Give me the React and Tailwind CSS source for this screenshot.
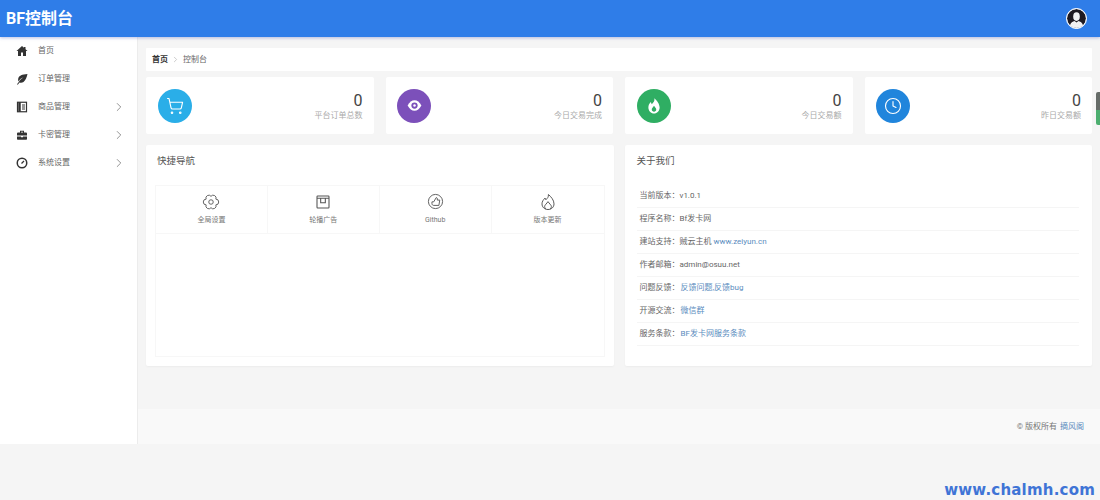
import React from 'react';
import { ChevronRight, ShoppingCart, Clock } from 'lucide-react';

const font = "font-['Roboto','Noto_Sans_CJK_SC',sans-serif]";

const HomeIcon = () => (
  <svg viewBox="0 0 24 24" className="w-[12px] h-[12px]" fill="#333">
    <path d="M12 2 1 12h3v10h6v-7h4v7h6V12h3l-4-3.6V4h-3v1.7z" />
  </svg>
);
const LeafIcon = () => (
  <svg viewBox="0 0 24 24" className="w-[12px] h-[12px]" fill="#333">
    <path d="M23 2C12 3 6 5 4.5 11c-.6 2.500-.1 4.500.6 5.800C7.500 12.500 11 10 15 8.500c-3.500 2.500-7 5.500-9.500 9.500L2 22.500l1.500 1L7 19c2.500 1 5.500.8 8-1 4-3 6.500-9 8-16z" />
  </svg>
);
const BookIcon = () => (
  <svg viewBox="0 0 24 24" className="w-[12px] h-[12px]" fill="none" stroke="#333" strokeWidth="2.4">
    <rect x="3" y="2.500" width="18" height="19" />
    <path d="M7 2.500v19" strokeWidth="5" />
    <path d="M12 8h6M12 12h6M12 16h6" strokeWidth="2" />
  </svg>
);
const BriefcaseIcon = () => (
  <svg viewBox="0 0 24 24" className="w-[12px] h-[12px]" fill="#333">
    <path d="M8 3.500h8V7h4a2 2 0 0 1 2 2v4H2V9a2 2 0 0 1 2-2h4zM10 5.500V7h4V5.500z" fillRule="evenodd" />
    <path d="M2 15h8v1.500h4V15h8v5a1.500 1.500 0 0 1-1.500 1.500h-17A1.500 1.500 0 0 1 2 20z" />
  </svg>
);
const GaugeIcon = () => (
  <svg viewBox="0 0 24 24" className="w-[12px] h-[12px]" fill="none" stroke="#333" strokeWidth="3">
    <circle cx="12" cy="12" r="9.500" />
    <path d="M11 13 16 8" strokeWidth="2.4" />
  </svg>
);
const EyeIcon = () => (
  <svg viewBox="0 0 24 24" className="w-[15px] h-[15px]">
    <path d="M1 12c3-5.500 6.800-8.500 11-8.500S20 6.500 23 12c-3 5.500-6.800 8.500-11 8.500S4 17.500 1 12z" fill="#fff" />
    <circle cx="12" cy="12" r="5" fill="#7c50ba" />
    <circle cx="12" cy="12" r="2" fill="#fff" />
  </svg>
);
const FlameIcon = () => (
  <svg viewBox="0 0 24 24" className="w-[18px] h-[18px]" fill="#fff">
    <path d="M12.500 1.500c.8 4-1.500 5.800-3.500 8-.6-.8-1-1.700-1.100-2.700C5.500 9 4.500 11.500 4.500 14c0 4.500 3.400 8 7.500 8s7.500-3.500 7.500-8c0-5-3.500-9.500-7-12.500zM12 19.500c-1.700 0-3-1.300-3-3 0-1.800 1.800-3 3-5 1.200 2 3 3.200 3 5 0 1.700-1.300 3-3 3z" fillRule="evenodd" />
  </svg>
);
const GearOutline = () => (
  <svg viewBox="0 0 24 24" className="w-[18px] h-[18px]" fill="none" stroke="#555" strokeWidth="1.2">
    <path d="M18.500 8.200A3.800 3.800 0 0 1 18.500 15.800A3.800 3.800 0 0 1 12 19.600A3.800 3.800 0 0 1 5.500 15.800A3.800 3.800 0 0 1 5.500 8.200A3.800 3.800 0 0 1 12 4.400A3.800 3.800 0 0 1 18.500 8.200z" strokeLinejoin="round" />
    <circle cx="12" cy="12" r="3" />
  </svg>
);
const BoxOutline = () => (
  <svg viewBox="0 0 24 24" className="w-[16px] h-[16px]" fill="none" stroke="#555" strokeWidth="1.6">
    <rect x="3" y="3" width="18" height="18" rx="1" />
    <path d="M3 6.500h18M8.500 6.500V13h7V6.500" />
  </svg>
);
const ThumbOutline = () => (
  <svg viewBox="0 0 24 24" className="w-[17px] h-[17px]" fill="none" stroke="#555" strokeWidth="1.3">
    <circle cx="12" cy="12" r="10" />
    <path d="M7 12.500h2.500L13 6.500c1.300 0 2 1.200 1.500 3.500H18l-1.200 7.500H9.500C8 17.500 7 16.500 7 15z" strokeLinejoin="round" />
  </svg>
);
const FlameOutline = () => (
  <svg viewBox="0 0 24 24" className="w-[18px] h-[18px]" fill="none" stroke="#555" strokeWidth="1.3">
    <path d="M12.500 2c.6 3.500-1.500 5-3.300 7-.6-.7-.9-1.500-1-2.300C5.700 9 4 11.500 4 14.500 4 19 7.500 22 12 22s8-3 8-7.500c0-5-3.800-9.500-7.500-12.500z" strokeLinejoin="round" />
    <path d="M9 21.500c-1-1-1.500-2.200-1.500-3.500 0-2 3-4 4.500-6.500 1.500 2.500 4.500 4.500 4.500 6.500 0 1.300-.5 2.500-1.500 3.500" />
  </svg>
);
const Avatar = () => (
  <svg viewBox="0 0 24 24" className="w-[21px] h-[21px] rounded-full border border-white bg-white">
    <circle cx="12" cy="12" r="12" fill="#1e1a22" />
    <ellipse cx="12" cy="9.500" rx="4.200" ry="5.500" fill="#f1f1f3" />
    <path d="M3.500 21c1-4 4-5.500 6-6l2.500 2 2.500-2c2 .5 5 2 6 6-2.200 2-5.200 3-8.500 3s-6.300-1-8.500-3z" fill="#f1f1f3" />
  </svg>
);

const menus = [
  { name: '首页', icon: <HomeIcon /> },
  { name: '订单管理', icon: <LeafIcon /> },
  { name: '商品管理', icon: <BookIcon />, sub: true },
  { name: '卡密管理', icon: <BriefcaseIcon />, sub: true },
  { name: '系统设置', icon: <GaugeIcon />, sub: true },
];

const stats = [
  { label: '平台订单总数', bg: 'bg-[#2aaee8]', icon: <ShoppingCart size={18} color="#fff" strokeWidth={1.5} /> },
  { label: '今日交易完成', bg: 'bg-[#7c50ba]', icon: <EyeIcon /> },
  { label: '今日交易额', bg: 'bg-[#2fae63]', icon: <FlameIcon /> },
  { label: '昨日交易额', bg: 'bg-[#2085dc]', icon: <Clock size={18} color="#fff" strokeWidth={1.5} /> },
];

const shortcuts = [
  { name: '全局设置', icon: <GearOutline /> },
  { name: '轮播广告', icon: <BoxOutline /> },
  { name: 'Github', icon: <ThumbOutline /> },
  { name: '版本更新', icon: <FlameOutline /> },
];

const about = [
  { label: '当前版本\uFF1A', text: 'v1.0.1' },
  { label: '程序名称\uFF1A', text: 'Bf发卡网' },
  { label: '建站支持\uFF1A', text: '贼云主机', link: 'www.zeiyun.cn' },
  { label: '作者邮箱\uFF1A', text: 'admin@osuu.net' },
  { label: '问题反馈\uFF1A', link: '反馈问题,反馈bug' },
  { label: '开源交流\uFF1A', link: '微信群' },
  { label: '服务条款\uFF1A', link: 'BF发卡网服务条款' },
];

export default function App() {
  return (
    <div className={`${font} relative h-[500px] overflow-hidden bg-[#f5f5f5] flex flex-col`}>
      {/* Header */}
      <header className="h-[37px] shrink-0 z-10 bg-[#2f7de8] shadow-[0_1px_3px_rgba(60,80,180,0.35)] flex items-center justify-between pl-[6px] pr-[13px]">
        <span className="text-white font-bold text-[16px] leading-none">BF控制台</span>
        <Avatar />
      </header>

      <div className="flex h-[407px] shrink-0">
        {/* Sidebar */}
        <aside className="w-[138px] shrink-0 bg-white border-r border-[#ececec] flex flex-col">
          {menus.map((m) => (
            <div key={m.name} className="h-[28px] flex items-center pl-[15px] pr-[11px] text-[#666] text-[8px]">
              <span className="w-[14px] flex justify-center shrink-0">{m.icon}</span>
              <span className="ml-[9px] flex-1">{m.name}</span>
              {m.sub && <ChevronRight size={14} color="#666" strokeWidth={1.2} />}
            </div>
          ))}
        </aside>

        {/* Main */}
        <main className="flex-1 flex flex-col min-w-0">
          <div className="flex-1 pl-[8px] pr-[8px] pt-[11px]">
            <div className="h-[23px] bg-white flex items-center pl-[6px] text-[8px] rounded-[1px]">
              <span className="text-[#333] font-bold">首页</span>
              <ChevronRight size={9} color="#bbb" className="mx-[3px]" />
              <span className="text-[#666]">控制台</span>
            </div>

            <div className="grid grid-cols-4 gap-x-[12px] mt-[6px]">
              {stats.map((s) => (
                <div key={s.label} className="h-[57px] bg-white rounded-[2px] flex items-center justify-between pl-[11.5px] pr-[11px]">
                  <div className={`w-[34px] h-[34px] rounded-full flex items-center justify-center ${s.bg}`}>{s.icon}</div>
                  <div className="text-right pt-[2px]">
                    <div className="text-[#444] text-[16px] leading-[17px]">0</div>
                    <div className="text-[#aaa] text-[8px] leading-[13px]">{s.label}</div>
                  </div>
                </div>
              ))}
            </div>

            <div className="grid grid-cols-2 gap-x-[11px] mt-[11px]">
              {/* Shortcuts */}
              <section className="h-[221px] bg-white rounded-[2px] shadow-[0_1px_2px_rgba(0,0,0,0.04)] px-[9px]">
                <h3 className="text-[#555] text-[9.5px] font-normal leading-none pt-[11px] pl-[2px]">快捷导航</h3>
                <div className="mt-[19px] h-[172px] border border-[#f7f7f7]">
                  <div className="grid grid-cols-4 h-[48px] border-b border-[#f7f7f7]">
                    {shortcuts.map((c, i) => (
                      <div key={c.name} className={`flex flex-col items-center ${i < 3 ? 'border-r border-[#f7f7f7]' : ''}`}>
                        <div className="h-[18px] mt-[7px] flex items-center justify-center">{c.icon}</div>
                        <div className="text-[#777] text-[7px] leading-none mt-[6px]">{c.name}</div>
                      </div>
                    ))}
                  </div>
                </div>
              </section>

              {/* About */}
              <section className="h-[221px] bg-white rounded-[2px] shadow-[0_1px_2px_rgba(0,0,0,0.04)] pl-[12px] pr-[13px]">
                <h3 className="text-[#555] text-[9.5px] font-normal leading-none pt-[11px]">关于我们</h3>
                <div className="mt-[19px]">
                  {about.map((r) => (
                    <div key={r.label} className="h-[23px] flex items-center pl-[3px] pt-[1px] border-b border-[#f5f5f5] text-[8px] text-[#666]">
                      <span>{r.label}</span>
                      {r.text && <span>{r.text}</span>}
                      {r.link && <span className={`text-[#5b8cbe] ${r.text ? 'ml-[2px]' : 'ml-[1px]'}`}>{r.link}</span>}
                    </div>
                  ))}
                </div>
              </section>
            </div>
          </div>

          <footer className="h-[35px] shrink-0 bg-[#f9f9f9] flex items-center justify-end pr-[16px] text-[8px] text-[#777]">
            <span>© 版权所有</span>
            <span className="text-[#5b8cbe] ml-[3px]">摘风阁</span>
          </footer>
        </main>
      </div>

      {/* scrollbar thumb */}
      <div className="absolute right-0 top-[92px] w-[4px] h-[33px] rounded-l-[2px] overflow-hidden flex flex-col">
        <div className="h-[18px] bg-[#666c68]" />
        <div className="flex-1 bg-[#4cae6f]" />
      </div>

      {/* watermark */}
      <div className="absolute right-[5px] bottom-[1px] text-[#3f74d6] font-bold text-[15px] tracking-[0.2px] leading-[18px] font-['DejaVu_Sans',sans-serif]">www.chalmh.com</div>
    </div>
  );
}
